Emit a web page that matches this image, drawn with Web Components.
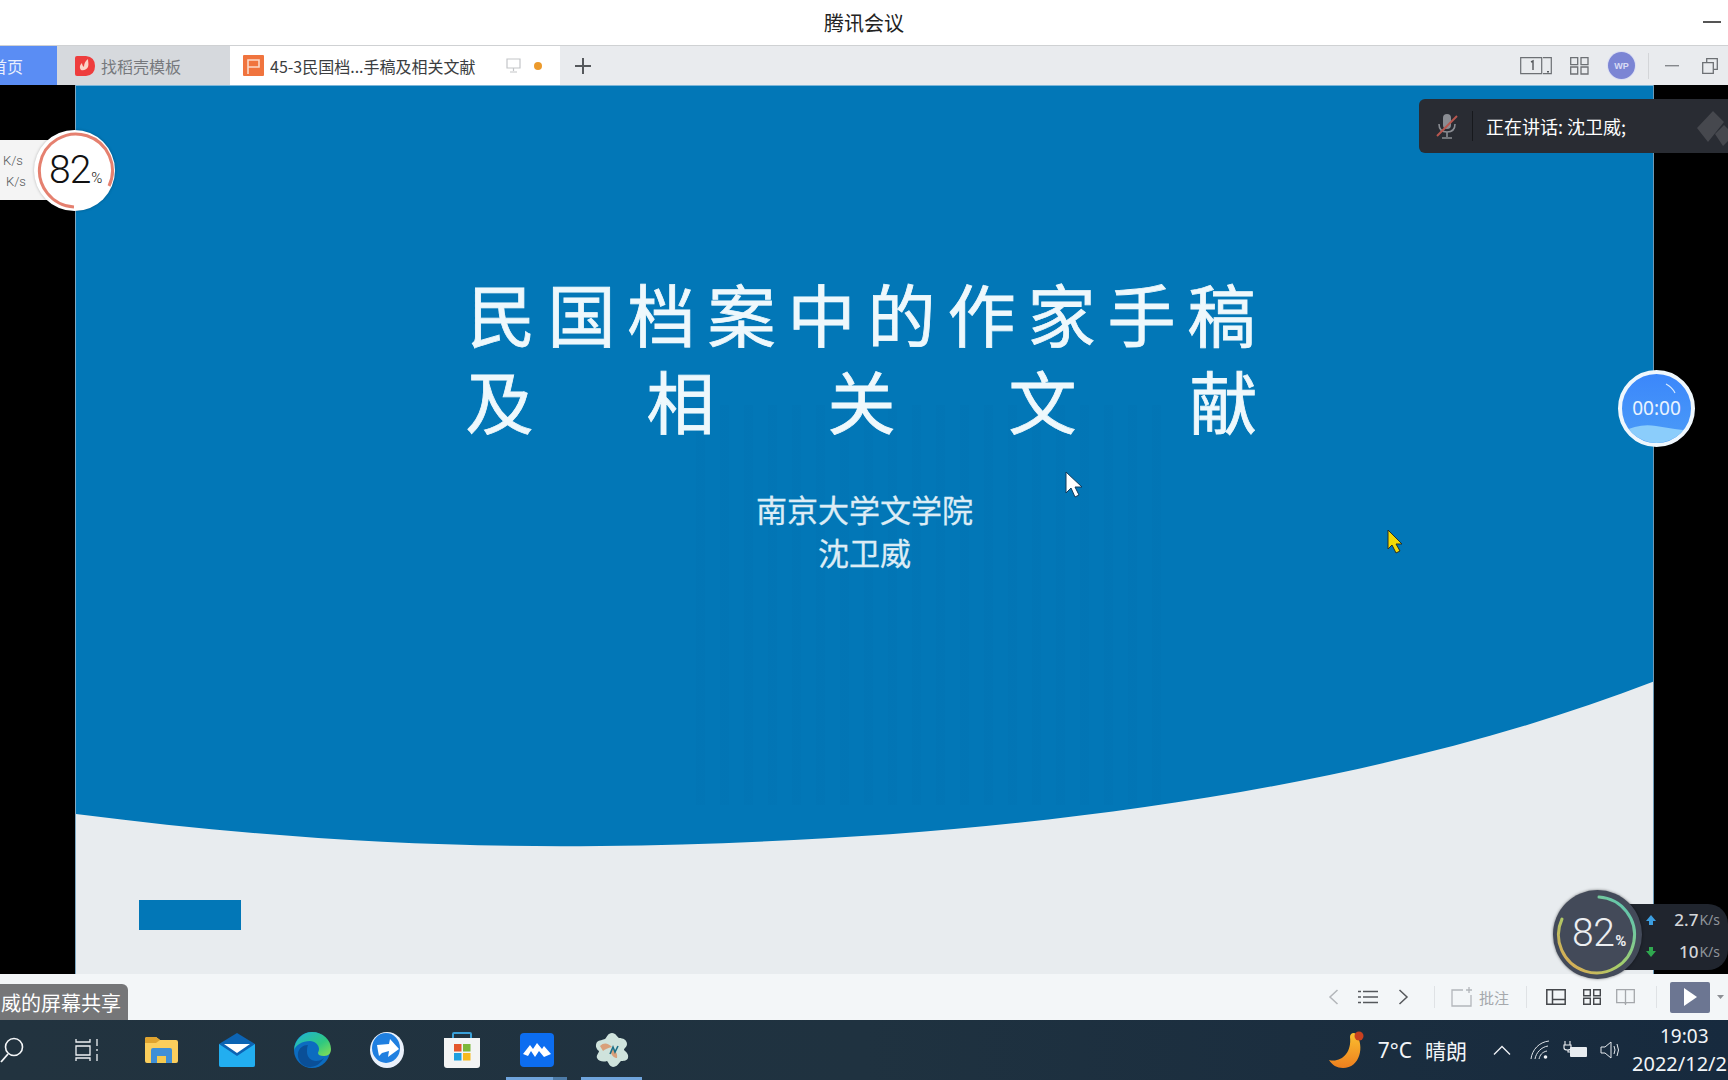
<!DOCTYPE html>
<html lang="zh">
<head>
<meta charset="utf-8">
<title>腾讯会议</title>
<style>
  html, body { margin: 0; height: 100%; overflow: hidden; background: #fff; }
  body { font-family: "Noto Sans CJK SC", "Noto Sans", sans-serif; }
  meeting-window { width: 1728px; height: 1080px; }
</style>
</head>
<body>
<meeting-window>
  <title-bar>腾讯会议</title-bar>
  <tab-strip></tab-strip>
  <slide-stage></slide-stage>
  <deck-status></deck-status>
  <win-taskbar></win-taskbar>
  <speaker-toast>正在讲话: 沈卫威;</speaker-toast>
  <load-dial-light></load-dial-light>
  <load-dial-dark></load-dial-dark>
  <timer-ball>00:00</timer-ball>
</meeting-window>

<script>
const CJK = `"Noto Sans CJK SC", "Noto Sans", sans-serif`;

class MeetingWindow extends HTMLElement {
  connectedCallback() {
    this.attachShadow({ mode: "open" });
    this.shadowRoot.innerHTML = `
      <style>
        :host { display: flex; flex-direction: column; position: relative; overflow: hidden; font-family: ${CJK}; }
      </style>
      <slot></slot>`;
  }
}

class TitleBar extends HTMLElement {
  connectedCallback() {
    this.attachShadow({ mode: "open" });
    this.shadowRoot.innerHTML = `
      <style>
        :host { display: flex; align-items: center; justify-content: center; position: relative; height: 45px; background: #fff; color: #222; font-size: 20px; flex: none; }
        .min { position: absolute; right: 7px; top: 21px; width: 18px; height: 2px; background: #555; }
      </style>
      <slot></slot><span class="min"></span>`;
  }
}

class TabStrip extends HTMLElement {
  connectedCallback() {
    this.attachShadow({ mode: "open" });
    this.shadowRoot.innerHTML = `
      <style>
        :host { display: flex; align-items: stretch; height: 40px; flex: none; background: #e9ebee; border-top: 1px solid #cfd1d3; box-sizing: border-box; font-size: 16px; white-space: nowrap; }
        .home { width: 57px; background: #5a8df4; color: #e8effd; display: flex; align-items: center; overflow: hidden; }
        .home span { margin-left: -9px; }
        .tab { display: flex; align-items: center; }
        .wps { width: 173px; background: #d6d9dd; color: #77797d; padding-left: 18px; box-sizing: border-box; gap: 6px; }
        .doc { width: 330px; background: #fff; color: #3b3d40; padding-left: 13px; box-sizing: border-box; gap: 6px; }
        .doc .name { width: 207px; overflow: hidden; }
        .dot { width: 8px; height: 8px; border-radius: 50%; background: #ec9a2c; margin-left: 7px; }
        .plus { margin-left: 15px; align-self: center; }
        .right { margin-left: auto; display: flex; align-items: center; }
        .avatar { width: 27px; height: 27px; border-radius: 50%; background: #7b85d4; color: #d9dcf5; font: 700 9px "Liberation Sans", sans-serif; display: flex; align-items: center; justify-content: center; margin-left: 19px; box-shadow: 0 0 0 1px #dcdff2; }
        .sep { width: 1px; height: 26px; background: #d3d5d8; margin-left: 13px; }
        svg { display: block; flex: none; }
      </style>
      <div class="home"><span>首页</span></div>
      <div class="tab wps">
        <svg width="20" height="22" viewBox="0 0 20 22"><path d="M0 3q0-2 2-2h9q9 1 9 10 0 9-9 10H2q-2 0-2-2z" fill="#ee3d3d"/><path d="M6 15c-2-3-1-5 1-7 0 2 1 3 2 4 0-3 1-6 4-8 0 3 1 5 0 8-1 2-4 4-7 3z" fill="#fbd3c8"/></svg>
        <span>找稻壳模板</span>
      </div>
      <div class="tab doc">
        <svg width="21" height="21" viewBox="0 0 21 21"><rect width="21" height="21" rx="1" fill="#f0743e"/><path d="M5 19V5h11v7H5" fill="none" stroke="#fbd9c8" stroke-width="1.600"/></svg>
        <span class="name">45-3民国档...手稿及相关文献</span>
        <svg width="15" height="15" viewBox="0 0 15 15" style="margin-left:23px"><path d="M1 1h13v9H1zM7.500 10v3M4 14h7" fill="none" stroke="#c3c5c8" stroke-width="1.200"/></svg>
        <span class="dot"></span>
      </div>
      <svg class="plus" width="16" height="16" viewBox="0 0 16 16"><path d="M8 0v16M0 8h16" stroke="#55585c" stroke-width="2"/></svg>
      <div class="right">
        <svg width="32" height="18" viewBox="0 0 32 18"><path d="M.7.700h21v16H.7zM23 .700h8.300v16H23" fill="none" stroke="#6d7074" stroke-width="1.200"/><path d="M11 5l2-1v9" fill="none" stroke="#55585c" stroke-width="1.400"/><rect x="27" y="14" width="2" height="1.500" fill="#55585c"/></svg>
        <svg style="margin-left:18px" width="19" height="18" viewBox="0 0 19 18"><path d="M.7.700h7v7h-7zM11 .700h7v7h-7zM.7 10h7v7h-7zM11 10h7v7h-7z" fill="none" stroke="#6d7074" stroke-width="1.300"/></svg>
        <span class="avatar">WP</span>
        <span class="sep"></span>
        <svg style="margin-left:16px" width="14" height="2" viewBox="0 0 14 2"><rect width="14" height="1.400" fill="#85888c"/></svg>
        <svg style="margin-left:23px;margin-right:10px" width="16" height="16" viewBox="0 0 16 16"><path d="M.7 4.700h10.600v10.600H.7zM4.700 4.500V.7h10.600v10.600h-3.800" fill="none" stroke="#6d7074" stroke-width="1.300"/></svg>
      </div>`;
  }
}

class SlideStage extends HTMLElement {
  connectedCallback() {
    this.attachShadow({ mode: "open" });
    this.shadowRoot.innerHTML = `
      <style>
        :host { display: grid; grid-template-columns: 75px 1579px 74px; height: 889px; flex: none; background: #000; }
        .slide { grid-column: 2; position: relative; background: #0277b7; color: #eef8fc; display: flex; flex-direction: column; align-items: center; padding-top: 184px; box-sizing: border-box; border-left: 1px solid #7fa9c4; border-right: 1px solid #6e9ab6; overflow: hidden; }
        .bg { position: absolute; left: 0; top: 0; }
        .edge { position: absolute; left: 0; top: 0; width: 100%; height: 1px; background: #7db6d8; }
        .stripes { position: absolute; left: 620px; top: 320px; width: 470px; height: 400px; background: repeating-linear-gradient(90deg, rgba(0,50,110,.022) 0 9px, transparent 9px 24px); }
        .t1, .t2, .s1, .s2 { position: relative; white-space: nowrap; }
        .t1, .t2 { font-size: 68px; line-height: 87px; font-weight: 400; -webkit-text-stroke: .8px currentColor; }
        .t1 { letter-spacing: 12px; padding-left: 6px; }
        .t2 { letter-spacing: 113px; padding-left: 107px; }
        .s1, .s2 { font-size: 31px; line-height: 43px; color: #dcecf5; -webkit-text-stroke: .3px currentColor; }
        .s1 { margin-top: 44px; }
        .cur { position: absolute; }
      </style>
      <div class="slide">
        <svg class="bg" width="1579" height="889" viewBox="0 0 1579 889">
          <path d="M0 729C180 752 350 763 525 761C880 757 1270 716 1579 596V889H0Z" fill="#e8ecef"/>
          <rect x="63" y="815" width="102" height="30" fill="#0277b7"/>
        </svg>
        <span class="edge"></span>
        <div class="stripes"></div>
        <div class="t1">民国档案中的作家手稿</div>
        <div class="t2">及相关文献</div>
        <div class="s1">南京大学文学院</div>
        <div class="s2">沈卫威</div>
        <svg class="cur" style="left:989px;top:386px" width="19" height="27" viewBox="0 0 19 27"><path d="M1 1v21l5-5 4 9 4-2-4-8h7z" fill="#fff" stroke="#123a5a" stroke-width="1"/></svg>
        <svg class="cur" style="left:1311px;top:444px" width="17" height="25" viewBox="0 0 17 25"><path d="M1 1v19l4-4 4 8 4-2-4-7h6z" fill="#f3da05" stroke="#26302a" stroke-width="1"/></svg>
      </div>`;
  }
}

class DeckStatus extends HTMLElement {
  connectedCallback() {
    this.attachShadow({ mode: "open" });
    this.shadowRoot.innerHTML = `
      <style>
        :host { display: flex; align-items: center; height: 46px; flex: none; background: #f3f6f8; position: relative; padding-left: 1328px; box-sizing: border-box; }
        .label { position: absolute; left: 0; top: 10px; width: 128px; height: 36px; background: #757678; border-radius: 0 6px 0 0; color: #fff; font-size: 20px; line-height: 37px; white-space: nowrap; overflow: hidden; padding-left: 1px; box-sizing: border-box; }
        svg { display: block; flex: none; }
        .sep { width: 1px; height: 22px; background: #dfe2e5; flex: none; }
        .note { color: #a5a8ac; font-size: 15px; margin-left: 6px; }
        .play { width: 40px; height: 31px; margin-left: 13px; border-radius: 2px; background: #6c7692; display: flex; align-items: center; justify-content: center; }
      </style>
      <div class="label">威的屏幕共享</div>
      <svg width="11" height="16" viewBox="0 0 11 16"><path d="M9.500 1L2 8l7.500 7" fill="none" stroke="#b3b6ba" stroke-width="1.500"/></svg>
      <svg style="margin-left:19px" width="20" height="14" viewBox="0 0 20 14"><path d="M5 1.500h15M5 7h15M5 12.500h15M0 1.500h3M0 7h3M0 12.500h3" stroke="#55585c" stroke-width="1.500"/></svg>
      <svg style="margin-left:20px" width="11" height="16" viewBox="0 0 11 16"><path d="M1.500 1L9 8l-7.500 7" fill="none" stroke="#55585c" stroke-width="1.500"/></svg>
      <span class="sep" style="margin-left:25px"></span>
      <svg style="margin-left:16px" width="22" height="20" viewBox="0 0 22 20"><path d="M12 3H1v16h19V8M18 0v6M15 3h6" fill="none" stroke="#b3b6ba" stroke-width="1.300"/></svg>
      <span class="note">批注</span>
      <span class="sep" style="margin-left:17px"></span>
      <svg style="margin-left:19px" width="20" height="16" viewBox="0 0 20 16"><path d="M.8.800h18.400v14.400H.8zM6.500.800v14.400M6.500 10.500h12.700" fill="none" stroke="#45484c" stroke-width="1.500"/></svg>
      <svg style="margin-left:17px" width="18" height="16" viewBox="0 0 18 16"><path d="M.7.700h6.600v6H.7zM10.700.700h6.600v6h-6.600zM.7 9.300h6.600v6H.7zM10.700 9.300h6.600v6h-6.600z" fill="none" stroke="#45484c" stroke-width="1.400"/></svg>
      <svg style="margin-left:15px" width="19" height="16" viewBox="0 0 19 16"><path d="M.7.700h17.600v13H10l-.5 1.500-.5-1.500H.7zM9.500.700v13" fill="none" stroke="#a4a7ab" stroke-width="1.300"/></svg>
      <span class="sep" style="margin-left:21px"></span>
      <span class="play"><svg width="13" height="18" viewBox="0 0 13 18"><path d="M0 0l13 9-13 9z" fill="#fff"/></svg></span>
      <svg style="margin-left:7px" width="7" height="4" viewBox="0 0 7 4"><path d="M0 0h7L3.500 4z" fill="#8c8f94"/></svg>`;
  }
}

class WinTaskbar extends HTMLElement {
  connectedCallback() {
    this.attachShadow({ mode: "open" });
    this.shadowRoot.innerHTML = `
      <style>
        :host { display: flex; align-items: center; height: 60px; flex: none; color: #f2f5f8; background: linear-gradient(90deg, #22333f, #1f3240 50%, #172a3e); position: relative; overflow: hidden; }
        .apps { display: grid; grid-template-columns: repeat(9, 75px); margin-left: -26px; justify-items: center; align-items: center; }
        .bar { position: absolute; bottom: 0; height: 3px; background: #6fa4dc; }
        .tray { margin-left: auto; display: flex; align-items: center; font-size: 21px; white-space: nowrap; }
        .clock { display: flex; flex-direction: column; align-items: flex-start; width: 96px; margin-left: 10px; font: 400 20px/27px "Noto Sans", sans-serif; overflow: hidden; }
        .clock .time { margin-left: 28px; font-size: 19px; }
        .temp { font-family: "Noto Sans", sans-serif; margin-left: 13px; }
        .sky { margin-left: 13px; }
        svg { display: block; flex: none; }
      </style>
      <div class="apps">
        <svg width="24" height="26" viewBox="0 0 24 26"><circle cx="14" cy="10" r="8.500" fill="none" stroke="#f4f6f8" stroke-width="1.600"/><path d="M8 17L1 25" stroke="#f4f6f8" stroke-width="1.800"/></svg>
        <svg width="24" height="24" viewBox="0 0 24 24"><path d="M1 1v3h14V1M1 8h14v9H1zM1 23v-3h14v3M22 1v7M22 11v2M22 16v7" fill="none" stroke="#eef1f4" stroke-width="1.300"/></svg>
        <svg width="33" height="28" viewBox="0 0 33 28"><path d="M0 3q0-2 2-2h9l4 3h16q2 0 2 2v19q0 2-2 2H2q-2 0-2-2z" fill="#fbce5c"/><path d="M0 3q0-2 2-2h9l4 3-4 3H0z" fill="#dfa32f"/><path d="M6 27V14q0-2 2-2h17q2 0 2 2v13h-6v-7h-9v7z" fill="#3f8fd6"/><rect x="12" y="20" width="9" height="7" fill="#f4c94f"/></svg>
        <svg width="36" height="34" viewBox="0 0 36 34"><path d="M0 11L18 0l18 11v21q0 2-2 2H2q-2 0-2-2z" fill="#0c64b4"/><path d="M0 11l18 12 18-12v21q0 2-2 2H2q-2 0-2-2z" fill="#22aef0"/><path d="M5 11h26L18 20z" fill="#fff"/></svg>
        <svg width="38" height="36" viewBox="0 0 38 36"><defs><linearGradient id="e1" x1="0" y1="0" x2="1" y2="1"><stop offset="0" stop-color="#1fb0de"/><stop offset=".6" stop-color="#2fc880"/><stop offset="1" stop-color="#8adf52"/></linearGradient></defs><circle cx="19" cy="18" r="18" fill="#0c6cc0"/><path d="M1 18C2 7 10 0 19 0c11 0 19 8 19 17 0 4-2 7-7 7-4 0-6-1-6-3 0-1 1-2 1-4 0-4-4-8-9-8-8 0-14 4-16 9z" fill="url(#e1)"/><path d="M14 20c0 5 4 9 9 9 3 0 6-1 8-3-3 5-8 9-14 9C8 35 4 27 5 21c1-5 5-8 10-8-1 2-1 4-1 7z" fill="#0a4f97"/></svg>
        <svg width="34" height="36" viewBox="0 0 34 36"><ellipse cx="17" cy="18" rx="17" ry="18" fill="#eaf1fb"/><ellipse cx="16" cy="16" rx="14" ry="15" fill="#1f7fe0"/><path d="M7 13l12-1 1-5 9 10-11 8 1-6-7 2-3 3-1-5z" fill="#fff"/></svg>
        <svg width="36" height="36" viewBox="0 0 36 36"><path d="M9 6V2q0-1 1-1h16q1 0 1 1v4" fill="none" stroke="#3aa0d8" stroke-width="2"/><path d="M0 6h36v27q0 3-3 3H3q-3 0-3-3z" fill="#f3f4f4"/><rect x="10" y="12" width="7.500" height="7.500" fill="#e4562b"/><rect x="19" y="12" width="7.500" height="7.500" fill="#7db83a"/><rect x="10" y="21" width="7.500" height="7.500" fill="#1e9fe0"/><rect x="19" y="21" width="7.500" height="7.500" fill="#f6b91e"/></svg>
        <svg width="34" height="34" viewBox="0 0 34 34"><rect width="34" height="34" rx="4" fill="#0c6df0"/><path d="M3 21l7-9 3 4 4-6 5 6 2-3 7 8-7 3-5-6-4 6-4-6-3 5z" fill="#fff"/></svg>
        <svg width="36" height="36" viewBox="0 0 36 36"><path d="M18 1c4 0 5 4 7 5 4 0 8 2 8 6 0 3-3 4-3 6 2 2 5 4 4 8-1 3-5 3-7 3-2 2-4 6-8 6-4-1-4-4-6-6-3 1-8 1-10-3-1-3 2-5 2-7-3-2-4-6-2-9 2-2 6-2 8-3 2-2 3-6 7-6z" fill="#cfe3dc"/><path d="M6 14c4-4 8-3 12 1-4 1-7 2-9 4zM22 26c-3-1-6-4-5-9 4 1 7 4 6 9z" fill="#d9a07a"/><path d="M16 22l3-7 2 5 3-6" fill="none" stroke="#1c6f87" stroke-width="1.600"/></svg>
      </div>
      <span class="bar" style="left:506px;width:47px"></span>
      <span class="bar" style="left:553px;width:14px;background:#4d7ba8"></span>
      <span class="bar" style="left:581px;width:61px"></span>
      <div class="tray">
        <svg width="36" height="38" viewBox="0 0 36 38"><defs><linearGradient id="m1" x1="0" y1="0" x2="0" y2="1"><stop offset="0" stop-color="#fbc02f"/><stop offset="1" stop-color="#ed7f1f"/></linearGradient></defs><path d="M27 3C36 15 31 37 14 37 8 37 3 34 0 29 12 32 23 22 21 6 21 2 25 1 27 3z" fill="url(#m1)"/><circle cx="30" cy="5" r="4.500" fill="#c9401f"/></svg>
        <span class="temp">7°C</span>
        <span class="sky">晴朗</span>
        <svg style="margin-left:26px" width="18" height="10" viewBox="0 0 18 10"><path d="M1 9.500L9 1.500l8 8" fill="none" stroke="#f0f3f6" stroke-width="1.300"/></svg>
        <svg style="margin-left:19px" width="20" height="20" viewBox="0 0 20 20"><path d="M1 19C2 10 9 2 19 1M5 19C6 13 11 7 18 6M9 19c1-4 3-7 8-8" fill="none" stroke="#dde2e7" stroke-width="1"/><circle cx="15.500" cy="17" r="1.800" fill="#f2f5f8"/></svg>
        <svg style="margin-left:13px" width="24" height="18" viewBox="0 0 24 18"><path d="M2 0v4M7 0v4M1 4h7v3q0 2-3.500 2T1 7zM5 9v2h2" fill="none" stroke="#eef1f4" stroke-width="1.100"/><rect x="7" y="6" width="17" height="10" rx="1" fill="#e8ecf0"/></svg>
        <svg style="margin-left:13px" width="22" height="20" viewBox="0 0 22 20"><path d="M1 7h4l6-5v16l-6-5H1zM14 6q2 4 0 8M17 4q3 6 0 12" fill="none" stroke="#e6eaee" stroke-width="1"/></svg>
        <div class="clock"><span class="time">19:03</span><span>2022/12/2</span></div>
      </div>`;
  }
}

class SpeakerToast extends HTMLElement {
  connectedCallback() {
    this.attachShadow({ mode: "open" });
    this.shadowRoot.innerHTML = `
      <style>
        :host { display: flex; align-items: center; position: absolute; left: 1419px; top: 99px; width: 309px; height: 54px; background: #292c33; border-radius: 6px 0 0 6px; color: #fff; font-size: 18px; white-space: nowrap; overflow: hidden; }
        .mic { margin-left: 17px; }
        .sep { width: 1px; height: 30px; background: #17191d; margin-left: 14px; }
        .txt { margin-left: 13px; }
        .mark { position: absolute; left: 278px; top: 11px; }
        svg { display: block; flex: none; }
      </style>
      <svg class="mic" width="22" height="28" viewBox="0 0 22 28"><rect x="7" y="2" width="8" height="15" rx="4" fill="#8a8d93"/><path d="M3 12q0 8 8 8t8-8M11 20v5M6 26h10" fill="none" stroke="#8a8d93" stroke-width="1.600"/><path d="M1 24L21 4" stroke="#b8574f" stroke-width="2"/></svg>
      <span class="sep"></span>
      <span class="txt"><slot></slot></span>
      <svg class="mark" width="34" height="36" viewBox="0 0 34 36"><path d="M0 18L16 1l11 11-16 20zM18 24l9-9 7 7v6l-8 8z" fill="#46484e"/></svg>`;
  }
}

class LoadDialLight extends HTMLElement {
  connectedCallback() {
    this.attachShadow({ mode: "open" });
    this.shadowRoot.innerHTML = `
      <style>
        :host { display: block; position: absolute; left: 0; top: 130px; width: 116px; height: 81px; }
        .panel { position: absolute; left: 0; top: 10px; width: 60px; height: 60px; background: #f4f4f4; color: #55585b; font: 300 13px/21px "Roboto", sans-serif; box-sizing: border-box; padding-top: 10px; }
        .panel div:first-child { padding-left: 3px; }
        .panel div:last-child { padding-left: 6px; }
        .ring { position: absolute; left: 34px; top: 0; width: 81px; height: 81px; border-radius: 50%; background: #fff; box-shadow: 0 0 3px rgba(0,0,0,.25); }
        .ring svg { position: absolute; left: 0; top: 0; }
        .val { position: absolute; left: 15px; top: 17px; color: #111; font: 300 39px/46px "Roboto", sans-serif; letter-spacing: -1px; white-space: nowrap; }
        .val small { font-size: 15px; margin-left: 1px; letter-spacing: 0; }
      </style>
      <div class="panel"><div>K/s</div><div>K/s</div></div>
      <div class="ring">
        <svg width="81" height="81" viewBox="0 0 81 81"><path d="M75 56A36.500 36.500 0 1 0 40 77" fill="none" stroke="#e5806f" stroke-width="3"/></svg>
        <div class="val">82<small>%</small></div>
      </div>`;
  }
}

class LoadDialDark extends HTMLElement {
  connectedCallback() {
    this.attachShadow({ mode: "open" });
    this.shadowRoot.innerHTML = `
      <style>
        :host { display: block; position: absolute; left: 1553px; top: 890px; width: 175px; height: 90px; }
        .panel { position: absolute; left: 70px; top: 14px; width: 105px; height: 66px; background: #20252e; border-radius: 0 20px 20px 0; box-sizing: border-box; padding: 0 8px 0 24px; display: grid; grid-template-rows: 32px 32px; font: 500 17px/32px "Noto Sans", sans-serif; color: #d4d6d9; }
        .panel .row { display: flex; align-items: center; justify-content: flex-end; position: relative; white-space: nowrap; }
        .row small { font-weight: 400; font-size: 14px; color: #8f949b; margin-left: 1px; }
        .row svg { position: absolute; left: -1px; }
        .ring { position: absolute; left: 0; top: 0; width: 89px; height: 89px; border-radius: 50%; background: #434a59; box-shadow: 0 0 3px rgba(0,0,0,.5); }
        .ring svg { position: absolute; left: 0; top: 0; }
        .val { position: absolute; left: 19px; top: 20px; color: #eceef1; font: 300 39px/46px "Roboto", sans-serif; letter-spacing: -.5px; white-space: nowrap; }
        .val small { font-size: 15px; font-weight: 700; margin-left: 1px; }
      </style>
      <div class="panel">
        <div class="row"><svg width="10" height="10" viewBox="0 0 10 10"><path d="M5 0l5 6H7v4H3V6H0z" fill="#3c9ee0"/></svg>2.7<small>K/s</small></div>
        <div class="row"><svg width="10" height="10" viewBox="0 0 10 10"><path d="M5 10L0 4h3V0h4v4h3z" fill="#2fa84f"/></svg>10<small>K/s</small></div>
      </div>
      <div class="ring">
        <svg width="89" height="89" viewBox="0 0 89 89">
          <defs><linearGradient id="d1" x1="1" y1="0" x2="0" y2="1"><stop offset="0" stop-color="#4fc3c0"/><stop offset=".55" stop-color="#a6cf6a"/><stop offset="1" stop-color="#e9a14e"/></linearGradient></defs>
          <path d="M46 7A38 38 0 1 1 9 29" fill="none" stroke="url(#d1)" stroke-width="3" stroke-linecap="round"/>
        </svg>
        <div class="val">82<small>%</small></div>
      </div>`;
  }
}

class TimerBall extends HTMLElement {
  connectedCallback() {
    this.attachShadow({ mode: "open" });
    this.shadowRoot.innerHTML = `
      <style>
        :host { display: flex; align-items: center; justify-content: center; position: absolute; left: 1618px; top: 370px; width: 77px; height: 77px; box-sizing: border-box; border: 4px solid #eff7fd; border-radius: 50%; overflow: hidden; color: #eaf4ff; font: 400 19px "Noto Sans", sans-serif; background: linear-gradient(180deg, #3b87fb, #4b9bf7); }
        svg { position: absolute; left: 0; top: 0; }
        span { position: relative; margin-top: -1px; }
      </style>
      <svg width="69" height="69" viewBox="0 0 69 69"><path d="M0 58q17-9 34-6t35 5v12H0z" fill="#8bcdfb"/><path d="M44 10q6 3 9 9" fill="none" stroke="#d8ebff" stroke-width="1.200"/></svg>
      <span><slot></slot></span>`;
  }
}

customElements.define("meeting-window", MeetingWindow);
customElements.define("title-bar", TitleBar);
customElements.define("tab-strip", TabStrip);
customElements.define("slide-stage", SlideStage);
customElements.define("deck-status", DeckStatus);
customElements.define("win-taskbar", WinTaskbar);
customElements.define("speaker-toast", SpeakerToast);
customElements.define("load-dial-light", LoadDialLight);
customElements.define("load-dial-dark", LoadDialDark);
customElements.define("timer-ball", TimerBall);
</script>
</body>
</html>
